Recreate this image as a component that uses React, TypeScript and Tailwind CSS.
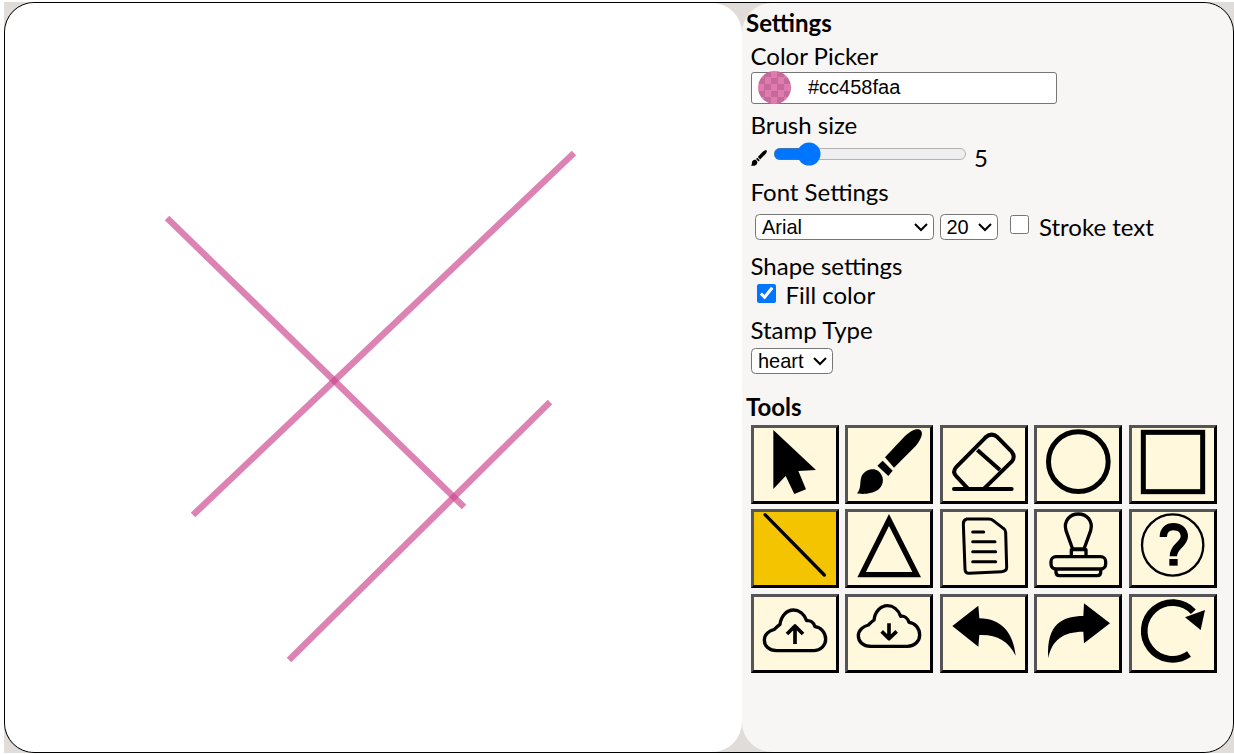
import React from 'react';

const labelCls = 'text-[24px] leading-[29px] text-black -ml-[0.5px]';
const headCls = 'text-[24px] leading-[29px] font-bold text-black -ml-[1px]';
const selectCls = 'block [zoom:1.5] text-[13.333px] [font-family:"Liberation_Sans",Arial,sans-serif] bg-white border border-[#767676] rounded-[3px] text-black';

const BrushShape = () => (
  <>
    <path d="M528 32C518 22 500 30 480 48L420 112L447 143L512 78C528 58 535 40 528 32Z" />
    <path d="M413 122L443 152L430 168L397 137Z" />
    <path d="M336 220C350 205 343 185 350 168C360 148 385 142 400 153C418 168 418 192 402 207C385 222 350 224 336 220Z" />
  </>
);

const CloudPath = 'M95 182H205C228 182 242 165 242 148C242 128 228 112 210 110C206 98 196 90 185 92C178 72 162 60 145 60C125 60 108 78 105 103C98 108 92 114 88 118C72 122 58 134 58 150C58 168 72 182 95 182Z';

const tools: { x: number; y: number; active?: boolean; icon: React.ReactNode }[] = [
  { x: 18, y: 15, icon: <path d="M85 30L213 150L160 153L183 208L148 222L122 168L85 207Z" /> },
  { x: 300, y: 15, icon: <BrushShape /> },
  {
    x: 585, y: 15,
    icon: (
      <g fill="none" stroke="#000" strokeWidth="12" strokeLinecap="round" strokeLinejoin="round">
        <path d="M722 52Q740 36 758 52L800 95Q812 110 800 125L718 205" />
        <path d="M722 52L635 140Q620 155 635 170L668 205" />
        <path d="M697 90L765 150" strokeLinecap="butt" />
        <path d="M627 207H800" />
      </g>
    ),
  },
  { x: 12, y: 15, icon: <circle cx="145" cy="125" r="89.5" fill="none" stroke="#000" strokeWidth="15" /> },
  { x: 297, y: 15, icon: <rect x="340" y="37" width="178" height="178" fill="none" stroke="#000" strokeWidth="15" /> },

  { x: 18, y: 15, active: true, icon: <path d="M60 32L238 213" stroke="#000" strokeWidth="10" strokeLinecap="round" /> },
  { x: 300, y: 15, icon: <path d="M432 48L350 212H515Z" fill="none" stroke="#000" strokeWidth="16" /> },
  {
    x: 585, y: 15,
    icon: (
      <g fill="none" stroke="#000" strokeWidth="9" strokeLinecap="round" strokeLinejoin="round">
        <path d="M665 45Q655 48 655 60L660 195Q660 208 672 208L770 203Q785 202 785 190L782 85Q782 78 775 73L745 50Q740 45 730 45Z" />
        <path d="M683 84H716M683 113H750M683 143H752M683 173H752" />
      </g>
    ),
  },
  {
    x: 12, y: 15,
    icon: (
      <g fill="none" stroke="#000" strokeWidth="10" strokeLinejoin="round">
        <path d="M128 135L108 80C100 50 120 30 145 30C170 30 190 50 182 80L162 135Z" />
        <path d="M124 155V137H168V155" />
        <rect x="63" y="158" width="164" height="37" rx="15" />
        <path d="M78 195V205Q78 215 88 215H202Q212 215 212 205V195" />
      </g>
    ),
  },
  {
    x: 297, y: 15,
    icon: (
      <>
        <circle cx="428" cy="123" r="92" fill="none" stroke="#000" strokeWidth="7" />
        <path d="M400 99C400 76 415 68 430 68C452 68 463 82 463 97C463 122 430 125 430 157" fill="none" stroke="#000" strokeWidth="22" />
        <rect x="418" y="165" width="25" height="20" />
      </>
    ),
  },

  {
    x: 18, y: 12,
    icon: (
      <g fill="none" stroke="#000" strokeWidth="10" strokeLinejoin="round">
        <path d={CloudPath} />
        <path d="M150 162V106M126 132L150 108L174 132" strokeWidth="11" />
      </g>
    ),
  },
  {
    x: 300, y: 12,
    icon: (
      <g fill="none" stroke="#000" strokeWidth="10" strokeLinejoin="round">
        <path d={CloudPath} transform="translate(282 -13)" />
        <path d="M432 100V145M410 124L432 146L455 124" strokeWidth="11" />
      </g>
    ),
  },
  { x: 585, y: 12, icon: <path d="M622 108L700 47L703 85C770 85 805 130 812 197C790 150 750 132 703 135L700 170Z" /> },
  { x: 12, y: 12, icon: <path d="M240 100L162 40L160 78C100 78 48 100 55 205C65 150 100 125 160 125L162 160Z" /> },
  {
    x: 297, y: 12,
    icon: (
      <>
        <path d="M477 192A85 85 0 1 1 490 65" fill="none" stroke="#000" strokeWidth="20" />
        <path d="M525 60L465 82L512 120Z" />
      </>
    ),
  },
];

export default function App() {
  return (
    <div className="h-screen w-full bg-white pt-[2px] pl-[4px] overflow-hidden [font-family:Lato,sans-serif]">
      <div className="h-[751px] w-[1230px] bg-[#e0dcd9]">
        <div className="flex h-full border border-black rounded-[30px] overflow-hidden bg-[#e0dcd9]">
          <div className="w-[737px] flex-none bg-white rounded-[30px]">
            <svg className="block" width="737" height="749" viewBox="5 3 737 749">
              <g stroke="#cc458f" strokeOpacity="0.667" strokeWidth="6.5" fill="none">
                <line x1="167" y1="218" x2="464" y2="507" />
                <line x1="574" y1="153" x2="193" y2="515" />
                <line x1="550" y1="402" x2="289" y2="660" />
              </g>
            </svg>
          </div>

          <div className="flex-1 bg-[#f7f6f4] rounded-[30px] pl-[5px] pt-[5px]">
            <div className={headCls}>Settings</div>

            <div className="pl-[4px] mt-[4px]">
              <div className={`${labelCls} mb-[2px]`}>Color Picker</div>
              <div className="relative w-[306px]">
                <input
                  type="text"
                  defaultValue="#cc458faa"
                  className="block w-full h-[32px] pl-[56px] pb-[2px] text-[20px] [font-family:'Liberation_Sans',Arial,sans-serif] text-black bg-white border border-[#767676] rounded-[3px]"
                />
                <div className="absolute left-[7px] top-[-1px] w-[33px] h-[33px] rounded-full bg-[repeating-conic-gradient(#c66a9a_0_25%,#df7bae_0_50%)] bg-[length:13px_13px]" />
              </div>

              <div className={`${labelCls} mt-[6px]`}>Brush size</div>
              <div className="flex items-center h-[24px] mt-[3px]">
                <svg className="flex-none mt-[8px]" width="16" height="16" viewBox="335 28 198 194">
                  <BrushShape />
                </svg>
                <input type="range" min="1" max="29" defaultValue="5" className="[zoom:1.5] w-[129px] m-0 ml-[4px] mr-[5px]" />
                <span className="text-[24px] leading-[29px] mt-[6px] text-black">5</span>
              </div>

              <div className={`${labelCls} mt-[11px]`}>Font Settings</div>
              <div className="flex items-center mt-[6px] pl-[4px]">
                <select className={`${selectCls} w-[119px]`} defaultValue="Arial">
                  <option>Arial</option>
                </select>
                <select className={`${selectCls} w-[39px] ml-[4px]`} defaultValue="20">
                  <option>20</option>
                </select>
                <input type="checkbox" className="w-[19px] h-[19px] ml-[12px] mb-[4px]" />
                <span className="text-[24px] leading-[29px] ml-[10px] text-black">Stroke text</span>
              </div>

              <div className={`${labelCls} mt-[10px]`}>Shape settings</div>
              <div className="flex items-center pl-[6px]">
                <input type="checkbox" defaultChecked className="w-[19px] h-[19px] mb-[2px]" />
                <span className="text-[24px] leading-[29px] ml-[9.5px] text-black">Fill color</span>
              </div>

              <div className={`${labelCls} mt-[6px]`}>Stamp Type</div>
              <select className={`${selectCls} w-[54.5px] mt-[2.4px]`} defaultValue="heart">
                <option>heart</option>
              </select>
            </div>

            <div className={`${headCls} mt-[18px]`}>Tools</div>
            <div className="grid grid-cols-[repeat(5,88px)] gap-x-[6.4px] gap-y-[5.5px] pl-[4px] mt-[4.3px]">
              {tools.map((t, i) => (
                <button
                  key={i}
                  className={`h-[79px] w-[88px] border-[3px] border-t-[#555] border-l-[#555] border-r-black border-b-black ${t.active ? 'bg-[#f5c400]' : 'bg-[#fff8dc]'}`}
                >
                  <svg className="block" width="82" height="73" viewBox={`${t.x + 9} ${t.y + 9} 246 219`}>
                    {t.icon}
                  </svg>
                </button>
              ))}
            </div>
          </div>
        </div>
      </div>
    </div>
  );
}
